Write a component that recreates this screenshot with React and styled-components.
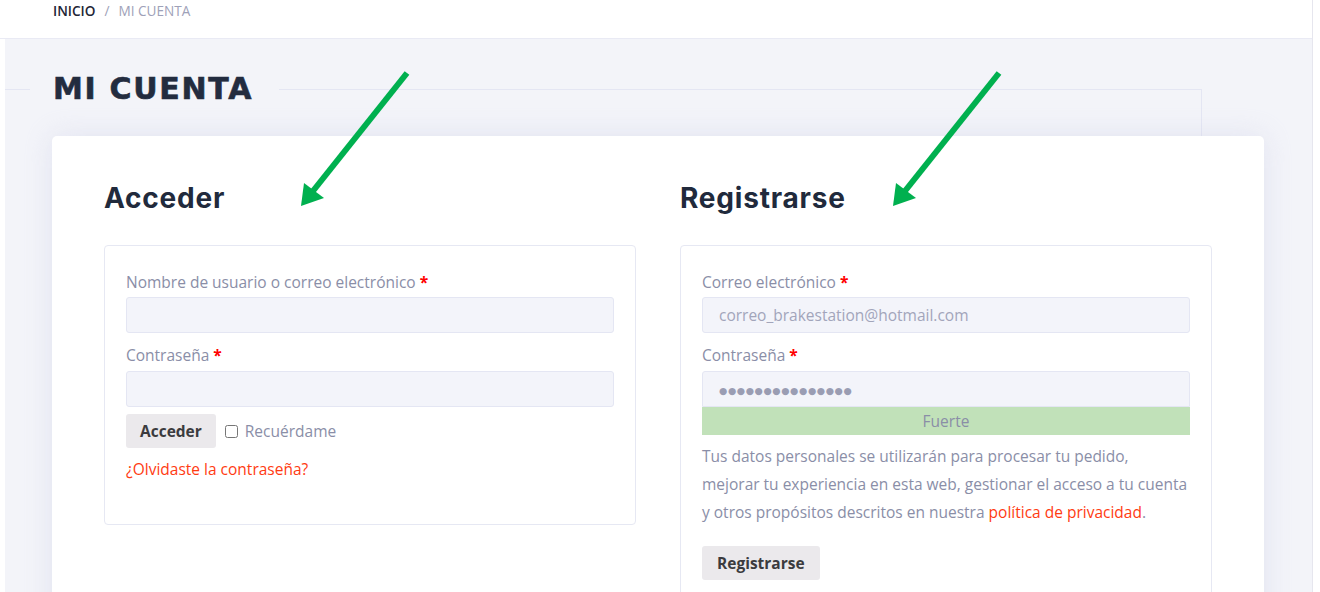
import React from "react";
import styled, { createGlobalStyle } from "styled-components";

const Global = createGlobalStyle`
  html, body { margin: 0; padding: 0; background: #ffffff; }
  body { font-family: "Open Sans", "Liberation Sans", sans-serif; }
  * { box-sizing: border-box; }
`;

const Root = styled.div`
  position: relative;
  width: 1320px;
  height: 592px;
  overflow: hidden;
  background: #ffffff;
`;

const Page = styled.div`
  width: 1313px;
  height: 592px;
  border-right: 1px solid #e6e6ee;
  display: flex;
  flex-direction: column;
`;

const TopBar = styled.div`
  height: 39px;
  flex: none;
  padding: 1px 0 0 53px;
  border-bottom: 1px solid #e9eaf4;
  background: #ffffff;
`;

const Crumbs = styled.nav`
  display: flex;
  align-items: center;
  gap: 9px;
  font-size: 13.6px;
  line-height: 20px;
  text-transform: uppercase;
`;

const Crumb = styled.span`
  color: ${(p) => (p.$active ? "#1e2536" : "#9ea1b8")};
  font-weight: ${(p) => (p.$active ? 600 : 400)};
`;

const Body = styled.div`
  flex: 1;
  margin-left: 5px;
  background: #f3f4f9;
  padding-top: 32px;
  overflow: hidden;
`;

const Frame = styled.fieldset`
  margin: 0;
  width: 1197px;
  min-height: 700px;
  padding: 0;
  border: 1px solid #e4e6f3;
  border-left: none;
  border-bottom: none;
`;

const Title = styled.legend`
  margin-left: 25px;
  padding: 0 26px 0 23px;
  font-family: "DejaVu Sans", "Liberation Sans", sans-serif;
  font-weight: 700;
  font-size: 30px;
  line-height: 36px;
  letter-spacing: 1.7px;
  color: #232c3f;
  -webkit-text-stroke: 0.6px #232c3f;
`;

const Card = styled.div`
  margin: 29px -63px 0 47px;
  background: #ffffff;
  border-radius: 5px;
  box-shadow: 0 0 28px rgba(205, 206, 230, 0.45);
  padding: 45px 52px 40px;
  display: grid;
  grid-template-columns: 532px 532px;
  column-gap: 44px;
  min-height: 520px;
`;

const Column = styled.div`
  display: flex;
  flex-direction: column;
`;

const Heading = styled.h2`
  margin: 0 0 30px;
  font-family: "Inter", "Liberation Sans", sans-serif;
  font-weight: 700;
  font-size: 28px;
  line-height: 34px;
  letter-spacing: 0.8px;
  color: #212a3c;
`;

const FormBox = styled.div`
  border: 1px solid #e6e8f3;
  border-radius: 4px;
  padding: 24px 21px ${(p) => p.$bottom}px;
  display: flex;
  flex-direction: column;
`;

const Label = styled.label`
  font-size: 15.5px;
  line-height: 24px;
  color: #8a8ea7;
  margin-bottom: ${(p) => p.$mb ?? 4}px;
`;

const Req = styled.span`
  color: #ff0000;
  font-weight: 700;
  margin-left: 4px;
`;

const Input = styled.div`
  height: 36px;
  background: #f3f4fa;
  border: 1px solid #e4e6f3;
  border-radius: 3px;
  padding: 0 16px;
  display: flex;
  align-items: center;
  font-size: 15.5px;
  color: #a2a5ba;
  margin-bottom: ${(p) => p.$mb ?? 10}px;
  ${(p) => p.$flatBottom && "border-bottom-left-radius: 0; border-bottom-right-radius: 0;"}
`;

const Dots = styled.span`
  font-family: "DejaVu Sans", sans-serif;
  font-size: 9.5px;
  letter-spacing: 0.6px;
  color: #9a9db3;
  padding-top: 2px;
`;

const Strength = styled.div`
  height: 28px;
  background: #c1e1b9;
  display: flex;
  align-items: center;
  justify-content: center;
  font-size: 15.5px;
  color: #8a8ea7;
`;

const ActionRow = styled.div`
  display: flex;
  align-items: center;
  margin-top: -3px;
`;

const Button = styled.button`
  height: 34px;
  padding: 0 ${(p) => p.$px}px;
  border: none;
  border-radius: 3px;
  background: #ebe9ec;
  font-family: "Open Sans", "Liberation Sans", sans-serif;
  font-weight: 700;
  font-size: 15.5px;
  color: #3b3b3e;
  cursor: pointer;
`;

const Check = styled.label`
  display: flex;
  align-items: center;
  margin-left: 9px;
  font-size: 15.5px;
  color: #8a8ea7;
  input {
    margin: 0 7px 0 0;
    width: 13px;
    height: 13px;
  }
`;

const Link = styled.a`
  color: #ff3b12;
  text-decoration: none;
`;

const Forgot = styled.div`
  margin-top: 9px;
  font-size: 15.5px;
  line-height: 24px;
`;

const Privacy = styled.p`
  margin: 7px 0 20px;
  font-size: 15.5px;
  line-height: 28px;
  color: #8a8ea7;
`;

const RegisterRow = styled.div`
  display: flex;
`;

const Arrows = styled.svg`
  position: absolute;
  left: 0;
  top: 0;
  pointer-events: none;
`;

function Arrow({ dx }) {
  return (
    <g transform={`translate(${dx} 0)`} fill="#00b04f" stroke="none">
      <line x1="407" y1="73" x2="313" y2="191" stroke="#00b04f" strokeWidth="6" />
      <polygon points="301,206 304,183 324,198" />
    </g>
  );
}

export default function App() {
  return (
    <Root>
      <Global />
      <Page>
        <TopBar>
          <Crumbs>
            <Crumb $active>Inicio</Crumb>
            <Crumb>/</Crumb>
            <Crumb>Mi cuenta</Crumb>
          </Crumbs>
        </TopBar>
        <Body>
          <Frame>
            <Title>MI CUENTA</Title>
            <Card>
              <Column>
                <Heading>Acceder</Heading>
                <FormBox $bottom={43}>
                  <Label $mb={3}>
                    Nombre de usuario o correo electrónico<Req>*</Req>
                  </Label>
                  <Input />
                  <Label>
                    Contraseña<Req>*</Req>
                  </Label>
                  <Input />
                  <ActionRow>
                    <Button $px={14}>Acceder</Button>
                    <Check>
                      <input type="checkbox" />
                      Recuérdame
                    </Check>
                  </ActionRow>
                  <Forgot>
                    <Link href="#">¿Olvidaste la contraseña?</Link>
                  </Forgot>
                </FormBox>
              </Column>
              <Column>
                <Heading>Registrarse</Heading>
                <FormBox $bottom={24}>
                  <Label $mb={3}>
                    Correo electrónico<Req>*</Req>
                  </Label>
                  <Input>correo_brakestation@hotmail.com</Input>
                  <Label>
                    Contraseña<Req>*</Req>
                  </Label>
                  <Input $mb={0} $flatBottom>
                    <Dots>●●●●●●●●●●●●●●●</Dots>
                  </Input>
                  <Strength>Fuerte</Strength>
                  <Privacy>
                    Tus datos personales se utilizarán para procesar tu pedido, mejorar tu
                    experiencia en esta web, gestionar el acceso a tu cuenta y otros
                    propósitos descritos en nuestra <Link href="#">política de privacidad</Link>.
                  </Privacy>
                  <RegisterRow>
                    <Button $px={15}>Registrarse</Button>
                  </RegisterRow>
                </FormBox>
              </Column>
            </Card>
          </Frame>
        </Body>
      </Page>
      <Arrows width="1320" height="592" viewBox="0 0 1320 592">
        <Arrow dx={0} />
        <Arrow dx={592} />
      </Arrows>
    </Root>
  );
}
